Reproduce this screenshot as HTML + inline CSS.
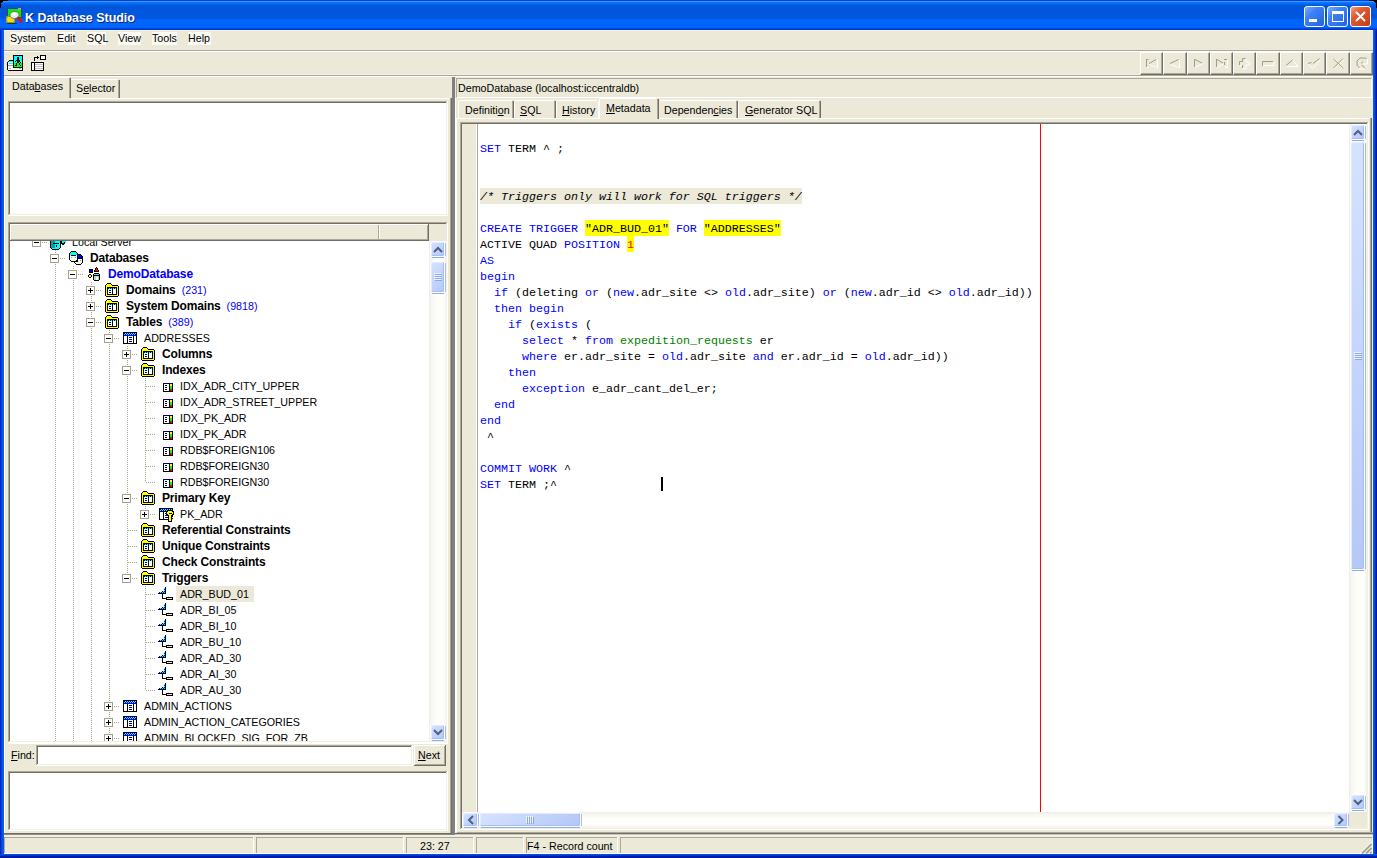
<!DOCTYPE html>
<html><head><meta charset="utf-8">
<style>
*{margin:0;padding:0;box-sizing:border-box}
html,body{width:1377px;height:858px;overflow:hidden;background:#ECE9D8;font-family:"Liberation Sans",sans-serif;font-size:10.7px;color:#000}
.a{position:absolute}
.t{position:absolute;white-space:pre;line-height:13px}
.b{font-weight:bold;font-size:11.8px}
.m{font-family:"Liberation Mono",monospace;font-size:11.67px;line-height:16px}
svg{position:absolute;overflow:visible}
u{text-decoration:underline;text-underline-offset:1px}
</style></head><body>
<div class="a" style="left:0px;top:0px;width:1377px;height:30px;background:linear-gradient(#0042D6 0px,#0042D6 1px,#3D95FF 1px,#3D95FF 2px,#0D7BFF 2px,#0068F0 4px,#0055DA 6px,#0058E0 18px,#0066FF 20px,#0066FF 27px,#005CF0 28px,#0036CF 29px,#0036CF 30px)"></div>
<div class="a" style="left:0px;top:30px;width:4px;height:828px;background:linear-gradient(90deg,#0018A8 0,#0030D0 1px,#0055EA 2px,#0A5FF0 4px)"></div>
<div class="a" style="left:1373px;top:30px;width:4px;height:828px;background:linear-gradient(90deg,#0A5FF0 0,#0045DC 2px,#0020B0 3px,#0010A0 4px)"></div>
<div class="a" style="left:0px;top:854px;width:1377px;height:4px;background:linear-gradient(#0A5FF0 0,#0045DC 1px,#0025B8 2px,#0010A0 4px)"></div>
<svg style="left:0;top:0" width="8" height="8"><path d="M0 0H8V1H3V2H2V3H1V8H0Z" fill="#000"/></svg>
<svg style="left:1369px;top:0" width="8" height="8"><path d="M8 0H0V1H5V2H6V3H7V8H8Z" fill="#000"/></svg>
<svg style="left:4px;top:5px" width="22" height="22">
<rect x="3" y="3" width="15" height="10" fill="#404850"/><rect x="4" y="4" width="13" height="8" fill="#00F000"/><rect x="4" y="3" width="10" height="1" fill="#3838B0"/><rect x="14" y="3" width="3" height="2" fill="#B0A0A0"/>
<rect x="2" y="11" width="9" height="7" rx="2" fill="#E8E020"/><rect x="2.5" y="11.5" width="8" height="6" rx="2" fill="none" stroke="#8A8000" stroke-width="0.8"/><rect x="3" y="18" width="10" height="1" fill="#303020"/>
<ellipse cx="10.5" cy="10" rx="4.6" ry="3.6" fill="#E8E8E8" stroke="#606060" stroke-width="0.8"/><ellipse cx="10" cy="9.5" rx="2" ry="1.2" fill="#fff"/>
<path d="M14 13L17.5 16.5" stroke="#E01000" stroke-width="2.6" stroke-linecap="round"/></svg>
<div class="t" style="left:25px;top:10px;color:#fff;font-weight:bold;font-size:12.45px;line-height:16px;text-shadow:1px 1px 0 #0A246A">K Database Studio</div>
<div class="a" style="left:1304px;top:6px;width:21px;height:21px;background:linear-gradient(135deg,#7CAEFF 0,#3C82F8 35%,#2462E0 100%);border:1px solid #fff;border-radius:3px"></div>
<div class="a" style="left:1327px;top:6px;width:21px;height:21px;background:linear-gradient(135deg,#7CAEFF 0,#3C82F8 35%,#2462E0 100%);border:1px solid #fff;border-radius:3px"></div>
<div class="a" style="left:1350px;top:6px;width:21px;height:21px;background:linear-gradient(135deg,#F0A080 0,#E05A30 35%,#C83C14 100%);border:1px solid #fff;border-radius:3px"></div>
<div class="a" style="left:1309px;top:19px;width:8px;height:3px;background:#fff"></div>
<div class="a" style="left:1332px;top:11px;width:12px;height:11px;border:1px solid #fff;border-top-width:3px"></div>
<svg style="left:1350px;top:6px" width="21" height="21"><path d="M6 6L15 15M15 6L6 15" stroke="#fff" stroke-width="2"/></svg>
<div class="a" style="left:4px;top:30px;width:1369px;height:1px;background:#F8F4E4"></div>
<div class="a" style="left:10px;top:32px;width:35px;height:13px;background:#FBFAF5"></div>
<div class="t" style="left:10px;top:32px;">System</div>
<div class="a" style="left:57px;top:32px;width:18px;height:13px;background:#FBFAF5"></div>
<div class="t" style="left:57px;top:32px;">Edit</div>
<div class="a" style="left:87px;top:32px;width:19px;height:13px;background:#FBFAF5"></div>
<div class="t" style="left:87px;top:32px;">SQL</div>
<div class="a" style="left:118px;top:32px;width:23px;height:13px;background:#FBFAF5"></div>
<div class="t" style="left:118px;top:32px;">View</div>
<div class="a" style="left:152px;top:32px;width:25px;height:13px;background:#FBFAF5"></div>
<div class="t" style="left:152px;top:32px;">Tools</div>
<div class="a" style="left:188px;top:32px;width:23px;height:13px;background:#FBFAF5"></div>
<div class="t" style="left:188px;top:32px;">Help</div>
<div class="a" style="left:4px;top:50px;width:1369px;height:1px;background:#ACA899"></div>
<div class="a" style="left:4px;top:51px;width:1369px;height:1px;background:#FFFFFF"></div>
<svg style="left:7px;top:55px" width="17" height="17" shape-rendering="crispEdges">
<path d="M2 5H6V16H1V15H0V7H1V6H2Z" fill="#000"/>
<rect x="1" y="7" width="5" height="5" fill="#F0F4F4"/><rect x="2" y="6" width="4" height="1" fill="#00FFFF"/><rect x="2" y="8" width="4" height="1" fill="#00FFFF"/><rect x="1" y="10" width="5" height="1" fill="#A0A0A0"/>
<rect x="1" y="11" width="14" height="4" fill="#fff"/><rect x="1" y="15" width="15" height="1" fill="#000"/><rect x="15" y="12" width="1" height="4" fill="#000"/><rect x="2" y="13" width="2" height="1" fill="#B0B0B0"/><rect x="12" y="13" width="2" height="1" fill="#B0B0B0"/>
<rect x="6" y="0" width="10" height="13" fill="#000"/><rect x="7" y="1" width="8" height="7" fill="#00FFFF"/><rect x="7" y="8" width="8" height="4" fill="#00FF00"/>
<rect x="10" y="2" width="2" height="2" fill="#000"/><rect x="10" y="4" width="2" height="4" fill="#000"/><rect x="9" y="5" width="1" height="1" fill="#000"/><rect x="8" y="6" width="1" height="1" fill="#000"/><rect x="12" y="5" width="1" height="2" fill="#000"/><rect x="13" y="7" width="1" height="1" fill="#000"/>
<rect x="9" y="8" width="1" height="3" fill="#000"/><rect x="12" y="8" width="1" height="2" fill="#000"/><rect x="13" y="10" width="1" height="1" fill="#000"/><rect x="8" y="10" width="1" height="1" fill="#000"/>
</svg>
<svg style="left:31px;top:55px" width="16" height="17" shape-rendering="crispEdges">
<rect x="9" y="0" width="6" height="5" fill="#000"/><rect x="10" y="1" width="4" height="3" fill="#fff"/>
<rect x="3" y="2" width="1" height="4" fill="#000"/><rect x="3" y="2" width="4" height="1" fill="#000"/><rect x="6" y="1" width="1" height="3" fill="#000"/><rect x="7" y="2" width="1" height="1" fill="#000"/>
<rect x="0" y="7" width="13" height="9" fill="#000"/><rect x="1" y="8" width="2" height="7" fill="#fff"/><rect x="4" y="8" width="8" height="7" fill="#fff"/>
<rect x="4" y="9" width="8" height="1" fill="#C0C0C0"/><rect x="4" y="11" width="8" height="1" fill="#C0C0C0"/><rect x="4" y="13" width="8" height="1" fill="#C0C0C0"/>
</svg>
<div class="a" style="left:1140px;top:52px;width:233px;height:23px;background:#ECE9D8"></div>
<div class="a" style="left:1140px;top:52px;width:23px;height:23px;border-left:1px solid #FFFFFF;border-top:1px solid #FFFFFF;border-right:1px solid #716F64;border-bottom:1px solid #716F64"></div>
<div class="a" style="left:1161px;top:53px;width:1px;height:21px;background:#ACA899"></div>
<div class="a" style="left:1141px;top:73px;width:21px;height:1px;background:#ACA899"></div>
<div class="a" style="left:1163px;top:52px;width:24px;height:23px;border-left:1px solid #FFFFFF;border-top:1px solid #FFFFFF;border-right:1px solid #716F64;border-bottom:1px solid #716F64"></div>
<div class="a" style="left:1185px;top:53px;width:1px;height:21px;background:#ACA899"></div>
<div class="a" style="left:1164px;top:73px;width:22px;height:1px;background:#ACA899"></div>
<div class="a" style="left:1187px;top:52px;width:23px;height:23px;border-left:1px solid #FFFFFF;border-top:1px solid #FFFFFF;border-right:1px solid #716F64;border-bottom:1px solid #716F64"></div>
<div class="a" style="left:1208px;top:53px;width:1px;height:21px;background:#ACA899"></div>
<div class="a" style="left:1188px;top:73px;width:21px;height:1px;background:#ACA899"></div>
<div class="a" style="left:1210px;top:52px;width:23px;height:23px;border-left:1px solid #FFFFFF;border-top:1px solid #FFFFFF;border-right:1px solid #716F64;border-bottom:1px solid #716F64"></div>
<div class="a" style="left:1231px;top:53px;width:1px;height:21px;background:#ACA899"></div>
<div class="a" style="left:1211px;top:73px;width:21px;height:1px;background:#ACA899"></div>
<div class="a" style="left:1233px;top:52px;width:23px;height:23px;border-left:1px solid #FFFFFF;border-top:1px solid #FFFFFF;border-right:1px solid #716F64;border-bottom:1px solid #716F64"></div>
<div class="a" style="left:1254px;top:53px;width:1px;height:21px;background:#ACA899"></div>
<div class="a" style="left:1234px;top:73px;width:21px;height:1px;background:#ACA899"></div>
<div class="a" style="left:1256px;top:52px;width:24px;height:23px;border-left:1px solid #FFFFFF;border-top:1px solid #FFFFFF;border-right:1px solid #716F64;border-bottom:1px solid #716F64"></div>
<div class="a" style="left:1278px;top:53px;width:1px;height:21px;background:#ACA899"></div>
<div class="a" style="left:1257px;top:73px;width:22px;height:1px;background:#ACA899"></div>
<div class="a" style="left:1280px;top:52px;width:23px;height:23px;border-left:1px solid #FFFFFF;border-top:1px solid #FFFFFF;border-right:1px solid #716F64;border-bottom:1px solid #716F64"></div>
<div class="a" style="left:1301px;top:53px;width:1px;height:21px;background:#ACA899"></div>
<div class="a" style="left:1281px;top:73px;width:21px;height:1px;background:#ACA899"></div>
<div class="a" style="left:1303px;top:52px;width:23px;height:23px;border-left:1px solid #FFFFFF;border-top:1px solid #FFFFFF;border-right:1px solid #716F64;border-bottom:1px solid #716F64"></div>
<div class="a" style="left:1324px;top:53px;width:1px;height:21px;background:#ACA899"></div>
<div class="a" style="left:1304px;top:73px;width:21px;height:1px;background:#ACA899"></div>
<div class="a" style="left:1326px;top:52px;width:24px;height:23px;border-left:1px solid #FFFFFF;border-top:1px solid #FFFFFF;border-right:1px solid #716F64;border-bottom:1px solid #716F64"></div>
<div class="a" style="left:1348px;top:53px;width:1px;height:21px;background:#ACA899"></div>
<div class="a" style="left:1327px;top:73px;width:22px;height:1px;background:#ACA899"></div>
<div class="a" style="left:1350px;top:52px;width:23px;height:23px;border-left:1px solid #FFFFFF;border-top:1px solid #FFFFFF;border-right:1px solid #716F64;border-bottom:1px solid #716F64"></div>
<div class="a" style="left:1371px;top:53px;width:1px;height:21px;background:#ACA899"></div>
<div class="a" style="left:1351px;top:73px;width:21px;height:1px;background:#ACA899"></div>
<div class="a" style="left:4px;top:74px;width:1136px;height:1px;background:#F4F1E4"></div>
<div class="a" style="left:4px;top:75px;width:1369px;height:1px;background:#ACA899"></div>
<div class="a" style="left:4px;top:76px;width:1369px;height:1px;background:#FFFFFF"></div>
<svg style="left:1140px;top:52px" width="24" height="23"><path d="M7 15.5H9M9.5 12.5L16.5 15.5M17.5 8V16" fill="none" stroke="#fff" stroke-width="1"/><path d="M6.5 7V15M6 7.5H8.5M9 11.5L16 7.5" fill="none" stroke="#A09C8C" stroke-width="1"/></svg>
<svg style="left:1163px;top:52px" width="24" height="23"><path d="M8 12.5L16 15.5M16.5 8V16" fill="none" stroke="#fff" stroke-width="1"/><path d="M7 11.5L15.5 7.5" fill="none" stroke="#A09C8C" stroke-width="1"/></svg>
<svg style="left:1187px;top:52px" width="24" height="23"><path d="M8 15.5L16 11.5" fill="none" stroke="#fff" stroke-width="1"/><path d="M7.5 7V15M8 7.5L15 11" fill="none" stroke="#A09C8C" stroke-width="1"/></svg>
<svg style="left:1210px;top:52px" width="24" height="23"><path d="M7 15.5L13.5 12M17.5 8V16M15 15.5H17" fill="none" stroke="#fff" stroke-width="1"/><path d="M6.5 7V15M7 7.5L13 11M14 7.5H17M14.5 10V13" fill="none" stroke="#A09C8C" stroke-width="1"/></svg>
<svg style="left:1233px;top:52px" width="24" height="23"><path d="M13 7V10H16.5V13H13V16.5H10M7 13.5H9" fill="none" stroke="#fff" stroke-width="1"/><path d="M6.5 13V9.5H9.5V6.5H12.5M9.5 13V16" fill="none" stroke="#A09C8C" stroke-width="1"/></svg>
<svg style="left:1256px;top:52px" width="24" height="23"><path d="M7 13.5H18V10" fill="none" stroke="#fff" stroke-width="1"/><path d="M6.5 14V9.5H17" fill="none" stroke="#A09C8C" stroke-width="1"/></svg>
<svg style="left:1280px;top:52px" width="24" height="23"><path d="M13 9L18 14M6.5 14.5H18" fill="none" stroke="#fff" stroke-width="1"/><path d="M6 13.5L12.5 8" fill="none" stroke="#A09C8C" stroke-width="1"/></svg>
<svg style="left:1303px;top:52px" width="24" height="23"><path d="M5.5 12.5L9.5 16.5L17.5 8" fill="none" stroke="#fff" stroke-width="1"/><path d="M5 11.5L8.5 10.5M10 11.5L16.5 6.5" fill="none" stroke="#A09C8C" stroke-width="1"/></svg>
<svg style="left:1326px;top:52px" width="24" height="23"><path d="M8.5 7L18.5 16M18 7.5L8.5 16.5" fill="none" stroke="#fff" stroke-width="1"/><path d="M7.5 7L17.5 16M17 6.5L7.5 16" fill="none" stroke="#A09C8C" stroke-width="1"/></svg>
<svg style="left:1350px;top:52px" width="24" height="23"><path d="M17.5 7V12H13.5M8 14L10 17H14" fill="none" stroke="#fff" stroke-width="1"/><path d="M16.5 6.5L15 6H10L7 9V13L9.5 16M13 9.5L11.5 11.5M12 13L14.5 16" fill="none" stroke="#A09C8C" stroke-width="1"/></svg>
<div class="a" style="left:4px;top:77px;width:1px;height:757px;background:#FFFFFF"></div>
<div class="a" style="left:71px;top:98px;width:378px;height:1px;background:#FFFFFF"></div>
<div class="a" style="left:4px;top:77px;width:67px;height:22px;background:#ECE9D8"></div>
<div class="a" style="left:5px;top:77px;width:64px;height:1px;background:#FFFFFF"></div>
<div class="a" style="left:4px;top:78px;width:1px;height:22px;background:#FFFFFF"></div>
<div class="a" style="left:69px;top:78px;width:1px;height:20px;background:#ACA899"></div>
<div class="a" style="left:70px;top:78px;width:1px;height:20px;background:#716F64"></div>
<div class="t" style="left:12px;top:80px;">Data<u>b</u>ases</div>
<div class="a" style="left:71px;top:79px;width:49px;height:19px;background:#ECE9D8"></div>
<div class="a" style="left:71px;top:79px;width:47px;height:1px;background:#FFFFFF"></div>
<div class="a" style="left:118px;top:80px;width:1px;height:18px;background:#ACA899"></div>
<div class="a" style="left:119px;top:80px;width:1px;height:18px;background:#716F64"></div>
<div class="t" style="left:76px;top:82px;">S<u>e</u>lector</div>
<div class="a" style="left:8px;top:101px;width:440px;height:115px;background:#fff"></div>
<div class="a" style="left:8px;top:101px;width:440px;height:1px;background:#ACA899"></div>
<div class="a" style="left:8px;top:101px;width:1px;height:115px;background:#ACA899"></div>
<div class="a" style="left:8px;top:215px;width:440px;height:1px;background:#FFFFFF"></div>
<div class="a" style="left:447px;top:101px;width:1px;height:115px;background:#FFFFFF"></div>
<div class="a" style="left:9px;top:102px;width:438px;height:1px;background:#716F64"></div>
<div class="a" style="left:9px;top:102px;width:1px;height:113px;background:#716F64"></div>
<div class="a" style="left:9px;top:214px;width:438px;height:1px;background:#F1EFE2"></div>
<div class="a" style="left:446px;top:102px;width:1px;height:113px;background:#F1EFE2"></div>
<div class="a" style="left:8px;top:222px;width:440px;height:521px;background:#fff"></div>
<div class="a" style="left:8px;top:222px;width:440px;height:1px;background:#ACA899"></div>
<div class="a" style="left:8px;top:222px;width:1px;height:521px;background:#ACA899"></div>
<div class="a" style="left:8px;top:742px;width:440px;height:1px;background:#FFFFFF"></div>
<div class="a" style="left:447px;top:222px;width:1px;height:521px;background:#FFFFFF"></div>
<div class="a" style="left:9px;top:223px;width:438px;height:1px;background:#716F64"></div>
<div class="a" style="left:9px;top:223px;width:1px;height:519px;background:#716F64"></div>
<div class="a" style="left:9px;top:741px;width:438px;height:1px;background:#F1EFE2"></div>
<div class="a" style="left:446px;top:223px;width:1px;height:519px;background:#F1EFE2"></div>
<div class="a" style="left:10px;top:224px;width:419px;height:17px;background:#ECE9D8"></div>
<div class="a" style="left:10px;top:240px;width:419px;height:1px;background:#716F64"></div>
<div class="a" style="left:11px;top:239px;width:417px;height:1px;background:#ACA899"></div>
<div class="a" style="left:378px;top:225px;width:1px;height:14px;background:#ACA899"></div>
<div class="a" style="left:379px;top:225px;width:1px;height:14px;background:#FFFFFF"></div>
<div class="a" style="left:428px;top:224px;width:1px;height:17px;background:#716F64"></div>
<div class="a" style="left:427px;top:225px;width:1px;height:14px;background:#ACA899"></div>
<div class="a" style="left:10px;top:224px;width:418px;height:1px;background:#FFFFFF"></div>
<div class="a" style="left:10px;top:224px;width:1px;height:16px;background:#FFFFFF"></div>
<div class="a" style="left:8px;top:743px;width:440px;height:1px;background:#FFFFFF"></div>
<div class="a" style="left:36px;top:745px;width:377px;height:21px;background:#fff"></div>
<div class="a" style="left:36px;top:745px;width:377px;height:1px;background:#ACA899"></div>
<div class="a" style="left:36px;top:745px;width:1px;height:21px;background:#ACA899"></div>
<div class="a" style="left:36px;top:765px;width:377px;height:1px;background:#FFFFFF"></div>
<div class="a" style="left:412px;top:745px;width:1px;height:21px;background:#FFFFFF"></div>
<div class="a" style="left:37px;top:746px;width:375px;height:1px;background:#716F64"></div>
<div class="a" style="left:37px;top:746px;width:1px;height:19px;background:#716F64"></div>
<div class="a" style="left:37px;top:764px;width:375px;height:1px;background:#F1EFE2"></div>
<div class="a" style="left:411px;top:746px;width:1px;height:19px;background:#F1EFE2"></div>
<div class="t" style="left:11px;top:749px;"><u>F</u>ind:</div>
<div class="a" style="left:414px;top:745px;width:32px;height:21px;background:#ECE9D8"></div>
<div class="a" style="left:414px;top:745px;width:32px;height:1px;background:#FFFFFF"></div>
<div class="a" style="left:414px;top:745px;width:1px;height:21px;background:#FFFFFF"></div>
<div class="a" style="left:414px;top:765px;width:32px;height:1px;background:#716F64"></div>
<div class="a" style="left:445px;top:745px;width:1px;height:21px;background:#716F64"></div>
<div class="a" style="left:415px;top:764px;width:30px;height:1px;background:#ACA899"></div>
<div class="a" style="left:444px;top:746px;width:1px;height:19px;background:#ACA899"></div>
<div class="t" style="left:418px;top:749px;"><u>N</u>ext</div>
<div class="a" style="left:8px;top:771px;width:440px;height:60px;background:#fff"></div>
<div class="a" style="left:8px;top:771px;width:440px;height:1px;background:#ACA899"></div>
<div class="a" style="left:8px;top:771px;width:1px;height:60px;background:#ACA899"></div>
<div class="a" style="left:8px;top:830px;width:440px;height:1px;background:#FFFFFF"></div>
<div class="a" style="left:447px;top:771px;width:1px;height:60px;background:#FFFFFF"></div>
<div class="a" style="left:9px;top:772px;width:438px;height:1px;background:#716F64"></div>
<div class="a" style="left:9px;top:772px;width:1px;height:58px;background:#716F64"></div>
<div class="a" style="left:9px;top:829px;width:438px;height:1px;background:#F1EFE2"></div>
<div class="a" style="left:446px;top:772px;width:1px;height:58px;background:#F1EFE2"></div>
<div class="a" style="left:456px;top:78px;width:916px;height:20px;border-top:1px solid #ACA899;border-left:1px solid #ACA899;border-bottom:1px solid #FFFFFF;border-right:1px solid #FFFFFF"></div>
<div class="t" style="left:458px;top:82px;">DemoDatabase (localhost:iccentraldb)</div>
<div class="a" style="left:458px;top:100px;width:56px;height:18px;background:#ECE9D8"></div>
<div class="a" style="left:459px;top:100px;width:53px;height:1px;background:#FFFFFF"></div>
<div class="a" style="left:458px;top:101px;width:1px;height:17px;background:#FFFFFF"></div>
<div class="a" style="left:512px;top:101px;width:1px;height:17px;background:#ACA899"></div>
<div class="a" style="left:513px;top:101px;width:1px;height:17px;background:#716F64"></div>
<div class="t" style="left:465px;top:104px;">Definiti<u>o</u>n</div>
<div class="a" style="left:514px;top:100px;width:42px;height:18px;background:#ECE9D8"></div>
<div class="a" style="left:515px;top:100px;width:39px;height:1px;background:#FFFFFF"></div>
<div class="a" style="left:514px;top:101px;width:1px;height:17px;background:#FFFFFF"></div>
<div class="a" style="left:554px;top:101px;width:1px;height:17px;background:#ACA899"></div>
<div class="a" style="left:555px;top:101px;width:1px;height:17px;background:#716F64"></div>
<div class="t" style="left:520px;top:104px;"><u>S</u>QL</div>
<div class="a" style="left:556px;top:100px;width:43px;height:18px;background:#ECE9D8"></div>
<div class="a" style="left:557px;top:100px;width:40px;height:1px;background:#FFFFFF"></div>
<div class="a" style="left:556px;top:101px;width:1px;height:17px;background:#FFFFFF"></div>
<div class="a" style="left:598px;top:101px;width:1px;height:17px;background:#FFFFFF"></div>
<div class="t" style="left:562px;top:104px;"><u>H</u>istory</div>
<div class="a" style="left:659px;top:100px;width:79px;height:18px;background:#ECE9D8"></div>
<div class="a" style="left:660px;top:100px;width:76px;height:1px;background:#FFFFFF"></div>
<div class="a" style="left:736px;top:101px;width:1px;height:17px;background:#ACA899"></div>
<div class="a" style="left:737px;top:101px;width:1px;height:17px;background:#716F64"></div>
<div class="t" style="left:664px;top:104px;">Dependen<u>c</u>ies</div>
<div class="a" style="left:738px;top:100px;width:83px;height:18px;background:#ECE9D8"></div>
<div class="a" style="left:739px;top:100px;width:80px;height:1px;background:#FFFFFF"></div>
<div class="a" style="left:738px;top:101px;width:1px;height:17px;background:#FFFFFF"></div>
<div class="a" style="left:819px;top:101px;width:1px;height:17px;background:#ACA899"></div>
<div class="a" style="left:820px;top:101px;width:1px;height:17px;background:#716F64"></div>
<div class="t" style="left:745px;top:104px;"><u>G</u>enerator SQL</div>
<div class="a" style="left:456px;top:118px;width:916px;height:1px;background:#FFFFFF"></div>
<div class="a" style="left:599px;top:98px;width:60px;height:21px;background:#ECE9D8"></div>
<div class="a" style="left:600px;top:98px;width:56px;height:1px;background:#FFFFFF"></div>
<div class="a" style="left:599px;top:99px;width:1px;height:20px;background:#FFFFFF"></div>
<div class="a" style="left:657px;top:99px;width:1px;height:20px;background:#ACA899"></div>
<div class="a" style="left:658px;top:99px;width:1px;height:20px;background:#716F64"></div>
<div class="t" style="left:606px;top:102px;"><u>M</u>etadata</div>
<div class="a" style="left:1371px;top:118px;width:1px;height:716px;background:#716F64"></div>
<div class="a" style="left:1370px;top:118px;width:1px;height:716px;background:#ACA899"></div>
<div class="a" style="left:460px;top:122px;width:909px;height:708px;background:#fff"></div>
<div class="a" style="left:460px;top:122px;width:909px;height:1px;background:#ACA899"></div>
<div class="a" style="left:460px;top:122px;width:1px;height:708px;background:#ACA899"></div>
<div class="a" style="left:460px;top:829px;width:909px;height:1px;background:#FFFFFF"></div>
<div class="a" style="left:1368px;top:122px;width:1px;height:708px;background:#FFFFFF"></div>
<div class="a" style="left:461px;top:123px;width:907px;height:1px;background:#716F64"></div>
<div class="a" style="left:461px;top:123px;width:1px;height:706px;background:#716F64"></div>
<div class="a" style="left:461px;top:828px;width:907px;height:1px;background:#F1EFE2"></div>
<div class="a" style="left:1367px;top:123px;width:1px;height:706px;background:#F1EFE2"></div>
<div class="a" style="left:462px;top:124px;width:14px;height:688px;background:#ECE9D8"></div>
<div class="a" style="left:476px;top:124px;width:1px;height:688px;background:#FFFFFF"></div>
<div class="a" style="left:477px;top:124px;width:1px;height:688px;background:#ACA899"></div>
<div class="a" style="left:1040px;top:124px;width:1px;height:688px;background:#FF0000"></div>
<div class="a" style="left:429px;top:241px;width:18px;height:500px;background:linear-gradient(90deg,#EEEDE5 0,#F6F5F0 2px,#FDFDFA 40%,#FEFEFB 80%,#F3F1EC 100%)"></div>
<div class="a" style="left:430px;top:241px;width:15px;height:16px;background:#FCFCFE;border-radius:3px"></div>
<div class="a" style="left:431px;top:242px;width:13px;height:14px;background:linear-gradient(135deg,#D6E3FE 0,#C6D6FC 45%,#B4C8F7 100%);border-radius:2px;box-shadow:inset -1px -1px 0 #A8BEF2, inset 1px 1px 0 #E4ECFF"></div>
<div class="a" style="left:432px;top:257px;width:12px;height:1px;background:#8FAEE6"></div>
<div class="a" style="left:445px;top:243px;width:1px;height:13px;background:#A8BEE6"></div>
<svg style="left:0;top:0" width="1377" height="858"><path d="M434.0 252.0L438.0 248.0L442.0 252.0" stroke="#4D6185" stroke-width="2" fill="none"/></svg>
<div class="a" style="left:430px;top:261px;width:15px;height:32px;background:#FCFCFE;border-radius:3px"></div>
<div class="a" style="left:431px;top:262px;width:13px;height:30px;background:linear-gradient(135deg,#D6E3FE 0,#C6D6FC 45%,#B4C8F7 100%);border-radius:2px;box-shadow:inset -1px -1px 0 #A8BEF2, inset 1px 1px 0 #E4ECFF"></div>
<div class="a" style="left:432px;top:293px;width:12px;height:1px;background:#8FAEE6"></div>
<div class="a" style="left:445px;top:263px;width:1px;height:29px;background:#A8BEE6"></div>
<div class="a" style="left:434px;top:273px;width:7px;height:1px;background:#EEF4FE"></div>
<div class="a" style="left:435px;top:274px;width:7px;height:1px;background:#8CA8E8"></div>
<div class="a" style="left:434px;top:275px;width:7px;height:1px;background:#EEF4FE"></div>
<div class="a" style="left:435px;top:276px;width:7px;height:1px;background:#8CA8E8"></div>
<div class="a" style="left:434px;top:277px;width:7px;height:1px;background:#EEF4FE"></div>
<div class="a" style="left:435px;top:278px;width:7px;height:1px;background:#8CA8E8"></div>
<div class="a" style="left:434px;top:279px;width:7px;height:1px;background:#EEF4FE"></div>
<div class="a" style="left:435px;top:280px;width:7px;height:1px;background:#8CA8E8"></div>
<div class="a" style="left:430px;top:724px;width:15px;height:16px;background:#FCFCFE;border-radius:3px"></div>
<div class="a" style="left:431px;top:725px;width:13px;height:14px;background:linear-gradient(135deg,#D6E3FE 0,#C6D6FC 45%,#B4C8F7 100%);border-radius:2px;box-shadow:inset -1px -1px 0 #A8BEF2, inset 1px 1px 0 #E4ECFF"></div>
<div class="a" style="left:432px;top:740px;width:12px;height:1px;background:#8FAEE6"></div>
<div class="a" style="left:445px;top:726px;width:1px;height:13px;background:#A8BEE6"></div>
<svg style="left:0;top:0" width="1377" height="858"><path d="M434.0 730.0L438.0 734.0L442.0 730.0" stroke="#4D6185" stroke-width="2" fill="none"/></svg>
<div class="a" style="left:429px;top:224px;width:18px;height:17px;background:#ECE9D8"></div>
<div class="a" style="left:1349px;top:124px;width:18px;height:688px;background:linear-gradient(90deg,#EEEDE5 0,#F6F5F0 2px,#FDFDFA 40%,#FEFEFB 80%,#F3F1EC 100%)"></div>
<div class="a" style="left:1350px;top:124px;width:15px;height:16px;background:#FCFCFE;border-radius:3px"></div>
<div class="a" style="left:1351px;top:125px;width:13px;height:14px;background:linear-gradient(135deg,#D6E3FE 0,#C6D6FC 45%,#B4C8F7 100%);border-radius:2px;box-shadow:inset -1px -1px 0 #A8BEF2, inset 1px 1px 0 #E4ECFF"></div>
<div class="a" style="left:1352px;top:140px;width:12px;height:1px;background:#8FAEE6"></div>
<div class="a" style="left:1365px;top:126px;width:1px;height:13px;background:#A8BEE6"></div>
<svg style="left:0;top:0" width="1377" height="858"><path d="M1354.0 135.0L1358.0 131.0L1362.0 135.0" stroke="#4D6185" stroke-width="2" fill="none"/></svg>
<div class="a" style="left:1350px;top:141px;width:15px;height:429px;background:#FCFCFE;border-radius:3px"></div>
<div class="a" style="left:1351px;top:142px;width:13px;height:427px;background:linear-gradient(135deg,#D6E3FE 0,#C6D6FC 45%,#B4C8F7 100%);border-radius:2px;box-shadow:inset -1px -1px 0 #A8BEF2, inset 1px 1px 0 #E4ECFF"></div>
<div class="a" style="left:1352px;top:570px;width:12px;height:1px;background:#8FAEE6"></div>
<div class="a" style="left:1365px;top:143px;width:1px;height:426px;background:#A8BEE6"></div>
<div class="a" style="left:1354px;top:352px;width:7px;height:1px;background:#EEF4FE"></div>
<div class="a" style="left:1355px;top:353px;width:7px;height:1px;background:#8CA8E8"></div>
<div class="a" style="left:1354px;top:354px;width:7px;height:1px;background:#EEF4FE"></div>
<div class="a" style="left:1355px;top:355px;width:7px;height:1px;background:#8CA8E8"></div>
<div class="a" style="left:1354px;top:356px;width:7px;height:1px;background:#EEF4FE"></div>
<div class="a" style="left:1355px;top:357px;width:7px;height:1px;background:#8CA8E8"></div>
<div class="a" style="left:1354px;top:358px;width:7px;height:1px;background:#EEF4FE"></div>
<div class="a" style="left:1355px;top:359px;width:7px;height:1px;background:#8CA8E8"></div>
<div class="a" style="left:1350px;top:794px;width:15px;height:16px;background:#FCFCFE;border-radius:3px"></div>
<div class="a" style="left:1351px;top:795px;width:13px;height:14px;background:linear-gradient(135deg,#D6E3FE 0,#C6D6FC 45%,#B4C8F7 100%);border-radius:2px;box-shadow:inset -1px -1px 0 #A8BEF2, inset 1px 1px 0 #E4ECFF"></div>
<div class="a" style="left:1352px;top:810px;width:12px;height:1px;background:#8FAEE6"></div>
<div class="a" style="left:1365px;top:796px;width:1px;height:13px;background:#A8BEE6"></div>
<svg style="left:0;top:0" width="1377" height="858"><path d="M1354.0 800.0L1358.0 804.0L1362.0 800.0" stroke="#4D6185" stroke-width="2" fill="none"/></svg>
<div class="a" style="left:462px;top:812px;width:887px;height:16px;background:linear-gradient(180deg,#EEEDE5 0,#F6F5F0 2px,#FDFDFA 40%,#FEFEFB 80%,#F3F1EC 100%)"></div>
<div class="a" style="left:462px;top:812px;width:16px;height:15px;background:#FCFCFE;border-radius:3px"></div>
<div class="a" style="left:463px;top:813px;width:14px;height:13px;background:linear-gradient(135deg,#D6E3FE 0,#C6D6FC 45%,#B4C8F7 100%);border-radius:2px;box-shadow:inset -1px -1px 0 #A8BEF2, inset 1px 1px 0 #E4ECFF"></div>
<div class="a" style="left:464px;top:827px;width:13px;height:1px;background:#8FAEE6"></div>
<div class="a" style="left:478px;top:814px;width:1px;height:12px;background:#A8BEE6"></div>
<svg style="left:0;top:0" width="1377" height="858"><path d="M473.0 816.0L469.0 820.0L473.0 824.0" stroke="#4D6185" stroke-width="2" fill="none"/></svg>
<div class="a" style="left:479px;top:812px;width:102px;height:15px;background:#FCFCFE;border-radius:3px"></div>
<div class="a" style="left:480px;top:813px;width:100px;height:13px;background:linear-gradient(135deg,#D6E3FE 0,#C6D6FC 45%,#B4C8F7 100%);border-radius:2px;box-shadow:inset -1px -1px 0 #A8BEF2, inset 1px 1px 0 #E4ECFF"></div>
<div class="a" style="left:481px;top:827px;width:99px;height:1px;background:#8FAEE6"></div>
<div class="a" style="left:581px;top:814px;width:1px;height:12px;background:#A8BEE6"></div>
<div class="a" style="left:526px;top:816px;width:1px;height:7px;background:#EEF4FE"></div>
<div class="a" style="left:527px;top:817px;width:1px;height:7px;background:#8CA8E8"></div>
<div class="a" style="left:528px;top:816px;width:1px;height:7px;background:#EEF4FE"></div>
<div class="a" style="left:529px;top:817px;width:1px;height:7px;background:#8CA8E8"></div>
<div class="a" style="left:530px;top:816px;width:1px;height:7px;background:#EEF4FE"></div>
<div class="a" style="left:531px;top:817px;width:1px;height:7px;background:#8CA8E8"></div>
<div class="a" style="left:532px;top:816px;width:1px;height:7px;background:#EEF4FE"></div>
<div class="a" style="left:533px;top:817px;width:1px;height:7px;background:#8CA8E8"></div>
<div class="a" style="left:1333px;top:812px;width:15px;height:15px;background:#FCFCFE;border-radius:3px"></div>
<div class="a" style="left:1334px;top:813px;width:13px;height:13px;background:linear-gradient(135deg,#D6E3FE 0,#C6D6FC 45%,#B4C8F7 100%);border-radius:2px;box-shadow:inset -1px -1px 0 #A8BEF2, inset 1px 1px 0 #E4ECFF"></div>
<div class="a" style="left:1335px;top:827px;width:12px;height:1px;background:#8FAEE6"></div>
<div class="a" style="left:1348px;top:814px;width:1px;height:12px;background:#A8BEE6"></div>
<svg style="left:0;top:0" width="1377" height="858"><path d="M1338.5 816.0L1342.5 820.0L1338.5 824.0" stroke="#4D6185" stroke-width="2" fill="none"/></svg>
<div class="a" style="left:1349px;top:812px;width:18px;height:16px;background:#ECE9D8"></div>
<div class="a" style="left:452px;top:77px;width:3px;height:758px;background:#808080"></div>
<div class="a" style="left:450px;top:98px;width:1px;height:735px;background:#ACA899"></div>
<div class="a" style="left:451px;top:98px;width:1px;height:736px;background:#716F64"></div>
<div class="a" style="left:455px;top:98px;width:1px;height:735px;background:#FFFFFF"></div>
<div class="a" style="left:456px;top:119px;width:1px;height:713px;background:#FFFFFF"></div>
<div class="a" style="left:457px;top:832px;width:916px;height:1px;background:#ACA899"></div>
<div class="a" style="left:4px;top:833px;width:448px;height:1px;background:#716F64"></div>
<div class="a" style="left:455px;top:833px;width:918px;height:1px;background:#716F64"></div>
<div class="a" style="left:4px;top:834px;width:448px;height:1px;background:#8C897C"></div>
<div class="a" style="left:455px;top:834px;width:918px;height:1px;background:#C8C5B8"></div>
<div class="a" style="left:4px;top:835px;width:1369px;height:1px;background:#F5F3E6"></div>
<div class="a" style="left:4px;top:836px;width:1369px;height:1px;background:#F0EEE2"></div>
<div class="a" style="left:4px;top:837px;width:250px;height:1px;background:#ACA899"></div>
<div class="a" style="left:4px;top:837px;width:1px;height:16px;background:#ACA899"></div>
<div class="a" style="left:253px;top:837px;width:1px;height:16px;background:#FFFFFF"></div>
<div class="a" style="left:256px;top:837px;width:148px;height:1px;background:#ACA899"></div>
<div class="a" style="left:256px;top:837px;width:1px;height:16px;background:#ACA899"></div>
<div class="a" style="left:403px;top:837px;width:1px;height:16px;background:#FFFFFF"></div>
<div class="a" style="left:406px;top:837px;width:68px;height:1px;background:#ACA899"></div>
<div class="a" style="left:406px;top:837px;width:1px;height:16px;background:#ACA899"></div>
<div class="a" style="left:473px;top:837px;width:1px;height:16px;background:#FFFFFF"></div>
<div class="a" style="left:476px;top:837px;width:48px;height:1px;background:#ACA899"></div>
<div class="a" style="left:476px;top:837px;width:1px;height:16px;background:#ACA899"></div>
<div class="a" style="left:523px;top:837px;width:1px;height:16px;background:#FFFFFF"></div>
<div class="a" style="left:526px;top:837px;width:92px;height:1px;background:#ACA899"></div>
<div class="a" style="left:526px;top:837px;width:1px;height:16px;background:#ACA899"></div>
<div class="a" style="left:617px;top:837px;width:1px;height:16px;background:#FFFFFF"></div>
<div class="a" style="left:620px;top:837px;width:753px;height:1px;background:#ACA899"></div>
<div class="a" style="left:620px;top:837px;width:1px;height:16px;background:#ACA899"></div>
<div class="a" style="left:1372px;top:837px;width:1px;height:16px;background:#FFFFFF"></div>
<div class="a" style="left:4px;top:853px;width:1369px;height:1px;background:#FFFFFF"></div>
<div class="t" style="left:420px;top:840px;">23: 27</div>
<div class="t" style="left:527px;top:840px;">F4 - Record count</div>
<svg style="left:1356px;top:838px" width="16" height="16"><path d="M4.5 15.5L15.5 4.5M8.5 15.5L15.5 8.5M12.5 15.5L15.5 12.5" stroke="#fff" stroke-width="1.2"/><path d="M6 15.5L15.5 6M10 15.5L15.5 10M14 15.5L15.5 14" stroke="#A8A492" stroke-width="1.8"/></svg>
<div class="t m" style="left:480px;top:141px"><span style="color:#0000FF">SET</span> TERM ^ ;</div>
<div class="a" style="left:480px;top:188px;width:322px;height:16px;background:#ECE9D8"></div>
<div class="t m" style="left:480px;top:189px"><span style="font-style:italic">/* Triggers only will work for SQL triggers */</span></div>
<div class="a" style="left:585px;top:220px;width:84px;height:16px;background:#FFFF00"></div>
<div class="a" style="left:704px;top:220px;width:77px;height:16px;background:#FFFF00"></div>
<div class="t m" style="left:480px;top:221px"><span style="color:#0000FF">CREATE TRIGGER</span> &quot;ADR_BUD_01&quot; <span style="color:#0000FF">FOR</span> &quot;ADDRESSES&quot;</div>
<div class="a" style="left:627px;top:236px;width:7px;height:16px;background:#FFFF00"></div>
<div class="t m" style="left:480px;top:237px">ACTIVE QUAD <span style="color:#0000FF">POSITION</span> <span style="color:#FF0000">1</span></div>
<div class="t m" style="left:480px;top:253px"><span style="color:#0000FF">AS</span></div>
<div class="t m" style="left:480px;top:269px"><span style="color:#0000FF">begin</span></div>
<div class="t m" style="left:480px;top:285px">  <span style="color:#0000FF">if</span> (deleting <span style="color:#0000FF">or</span> (<span style="color:#0000FF">new</span>.adr_site &lt;&gt; <span style="color:#0000FF">old</span>.adr_site) <span style="color:#0000FF">or</span> (<span style="color:#0000FF">new</span>.adr_id &lt;&gt; <span style="color:#0000FF">old</span>.adr_id))</div>
<div class="t m" style="left:480px;top:301px">  <span style="color:#0000FF">then begin</span></div>
<div class="t m" style="left:480px;top:317px">    <span style="color:#0000FF">if</span> (<span style="color:#0000FF">exists</span> (</div>
<div class="t m" style="left:480px;top:333px">      <span style="color:#0000FF">select</span> * <span style="color:#0000FF">from</span> <span style="color:#008000">expedition_requests</span> er</div>
<div class="t m" style="left:480px;top:349px">      <span style="color:#0000FF">where</span> er.adr_site = <span style="color:#0000FF">old</span>.adr_site <span style="color:#0000FF">and</span> er.adr_id = <span style="color:#0000FF">old</span>.adr_id))</div>
<div class="t m" style="left:480px;top:365px">    <span style="color:#0000FF">then</span></div>
<div class="t m" style="left:480px;top:381px">      <span style="color:#0000FF">exception</span> e_adr_cant_del_er;</div>
<div class="t m" style="left:480px;top:397px">  <span style="color:#0000FF">end</span></div>
<div class="t m" style="left:480px;top:413px"><span style="color:#0000FF">end</span></div>
<div class="t m" style="left:480px;top:429px"> ^</div>
<div class="t m" style="left:480px;top:461px"><span style="color:#0000FF">COMMIT WORK</span> ^</div>
<div class="t m" style="left:480px;top:477px"><span style="color:#0000FF">SET</span> TERM ;^</div>
<div class="a" style="left:661px;top:477px;width:2px;height:14px;background:#000"></div>
<div class="a" style="left:10px;top:241px;width:419px;height:500px;overflow:hidden">
<div class="a" style="left:45px;top:5px;width:1px;height:495px;background:repeating-linear-gradient(to bottom,#A8A290 0,#A8A290 1px,transparent 1px,transparent 2px)"></div>
<div class="a" style="left:63px;top:25px;width:1px;height:475px;background:repeating-linear-gradient(to bottom,#A8A290 0,#A8A290 1px,transparent 1px,transparent 2px)"></div>
<div class="a" style="left:81px;top:41px;width:1px;height:459px;background:repeating-linear-gradient(to bottom,#A8A290 0,#A8A290 1px,transparent 1px,transparent 2px)"></div>
<div class="a" style="left:99px;top:89px;width:1px;height:411px;background:repeating-linear-gradient(to bottom,#A8A290 0,#A8A290 1px,transparent 1px,transparent 2px)"></div>
<div class="a" style="left:117px;top:105px;width:1px;height:232px;background:repeating-linear-gradient(to bottom,#A8A290 0,#A8A290 1px,transparent 1px,transparent 2px)"></div>
<div class="a" style="left:135px;top:137px;width:1px;height:104px;background:repeating-linear-gradient(to bottom,#A8A290 0,#A8A290 1px,transparent 1px,transparent 2px)"></div>
<div class="a" style="left:135px;top:265px;width:1px;height:8px;background:repeating-linear-gradient(to bottom,#A8A290 0,#A8A290 1px,transparent 1px,transparent 2px)"></div>
<div class="a" style="left:135px;top:345px;width:1px;height:104px;background:repeating-linear-gradient(to bottom,#A8A290 0,#A8A290 1px,transparent 1px,transparent 2px)"></div>
<div class="a" style="left:22px;top:-3px;width:9px;height:9px;background:#fff;border:1px solid #A8A08C"></div>
<div class="a" style="left:24px;top:1px;width:5px;height:1px;background:#000"></div>
<div class="a" style="left:32px;top:1px;width:5px;height:1px;background:repeating-linear-gradient(to right,#A8A290 0,#A8A290 1px,transparent 1px,transparent 2px)"></div>
<svg style="left:40px;top:-7px" width="16" height="16" shape-rendering="crispEdges"><path d="M0 5H11V14H10V15H9V16H2V15H1V14H0Z" fill="#000"/><rect x="1" y="6" width="9" height="8" fill="#00FFFF"/><rect x="1" y="6" width="4" height="8" fill="#00A0A8"/><rect x="2" y="14" width="7" height="1" fill="#00FFFF"/><rect x="3" y="9" width="6" height="1" fill="#000"/><rect x="6" y="11" width="1" height="2" fill="#000"/><path d="M11 6H16V9H15V10H14V11H12V10H11Z" fill="#000"/><path d="M12 6H16V9H15V8H14V9H12Z" fill="#00FFFF"/></svg>
<div class="t" style="left:62px;top:-7px;line-height:16px">Local Server</div>
<div class="a" style="left:40px;top:13px;width:9px;height:9px;background:#fff;border:1px solid #A8A08C"></div>
<div class="a" style="left:42px;top:17px;width:5px;height:1px;background:#000"></div>
<div class="a" style="left:50px;top:17px;width:5px;height:1px;background:repeating-linear-gradient(to right,#A8A290 0,#A8A290 1px,transparent 1px,transparent 2px)"></div>
<svg style="left:58px;top:9px" width="16" height="16" shape-rendering="crispEdges"><path d="M9 4H13V5H14V6H15V13H14V14H13V15H8V14H7V13H6V11H9Z" fill="#000"/><rect x="10" y="5" width="3" height="3" fill="#0000FF"/><rect x="13" y="6" width="1" height="1" fill="#0000FF"/><rect x="7" y="12" width="7" height="1" fill="#F4F4F4"/><rect x="10" y="9" width="4" height="4" fill="#F4F4F4"/><rect x="8" y="13" width="5" height="1" fill="#F4F4F4"/><rect x="12" y="10" width="1" height="1" fill="#A0A0A0"/><path d="M3 1H8V2H9V3H10V10H9V11H8V12H3V11H2V10H1V3H2V2H3Z" fill="#000"/><rect x="3" y="2" width="5" height="1" fill="#00FFFF"/><rect x="2" y="3" width="7" height="2" fill="#00FFFF"/><rect x="2" y="5" width="7" height="5" fill="#F4F4F4"/><rect x="3" y="10" width="5" height="1" fill="#F4F4F4"/><rect x="3" y="5" width="5" height="1" fill="#000"/><rect x="3" y="7" width="1" height="1" fill="#A0A0A0"/><rect x="7" y="7" width="1" height="1" fill="#A0A0A0"/></svg>
<div class="t" style="left:80px;top:9px;line-height:16px;font-weight:bold;font-size:12px;letter-spacing:-0.15px">Databases</div>
<div class="a" style="left:58px;top:29px;width:9px;height:9px;background:#fff;border:1px solid #A8A08C"></div>
<div class="a" style="left:60px;top:33px;width:5px;height:1px;background:#000"></div>
<div class="a" style="left:68px;top:33px;width:5px;height:1px;background:repeating-linear-gradient(to right,#A8A290 0,#A8A290 1px,transparent 1px,transparent 2px)"></div>
<svg style="left:76px;top:25px" width="16" height="16" shape-rendering="crispEdges"><rect x="3" y="3" width="4" height="4" fill="#000"/><rect x="4" y="4" width="2" height="2" fill="#0000FF"/><path d="M10 1H11V2H12V4H13V6H8V4H9V2H10Z" fill="#000"/><rect x="10" y="2" width="1" height="3" fill="#FF0000"/><rect x="9" y="4" width="3" height="1" fill="#FF0000"/><path d="M3 8H5V9H6V11H5V12H3V11H2V9H3Z" fill="#000"/><rect x="3" y="9" width="2" height="2" fill="#FFFF00"/><path d="M8 7H13V8H14V14H13V15H8V14H7V8H8Z" fill="#000"/><rect x="8" y="8" width="5" height="1" fill="#00FFFF"/><rect x="8" y="10" width="5" height="4" fill="#C8C8C8"/><rect x="10" y="11" width="2" height="3" fill="#fff"/></svg>
<div class="t" style="left:98px;top:25px;color:#0000FF;line-height:16px;font-weight:bold;font-size:12px;letter-spacing:-0.15px">DemoDatabase</div>
<div class="a" style="left:76px;top:45px;width:9px;height:9px;background:#fff;border:1px solid #A8A08C"></div>
<div class="a" style="left:78px;top:49px;width:5px;height:1px;background:#000"></div>
<div class="a" style="left:80px;top:47px;width:1px;height:5px;background:#000"></div>
<div class="a" style="left:86px;top:49px;width:5px;height:1px;background:repeating-linear-gradient(to right,#A8A290 0,#A8A290 1px,transparent 1px,transparent 2px)"></div>
<svg style="left:94px;top:41px" width="16" height="16" shape-rendering="crispEdges"><path d="M3 1H7V2H8V3H14V4H15V14H14V15H2V14H1V3H2V2H3Z" fill="#000"/><path d="M3 2H7V3H8V4H14V14H2V3H3Z" fill="#FFFF00"/><rect x="3" y="5" width="10" height="8" fill="#000"/><rect x="4" y="6" width="4" height="6" fill="#fff"/><rect x="9" y="6" width="3" height="6" fill="#fff"/><rect x="4" y="6" width="1" height="1" fill="#0000FF"/><rect x="5" y="6" width="1" height="1" fill="#00FFFF"/><rect x="6" y="6" width="1" height="1" fill="#0000FF"/><rect x="7" y="6" width="1" height="1" fill="#00FFFF"/><rect x="9" y="6" width="1" height="1" fill="#00FFFF"/><rect x="10" y="6" width="1" height="1" fill="#0000FF"/><rect x="11" y="6" width="1" height="1" fill="#00FFFF"/><rect x="5" y="8" width="2" height="1" fill="#000080"/><rect x="5" y="10" width="2" height="1" fill="#000080"/></svg>
<div class="t" style="left:116px;top:41px;line-height:16px;font-weight:bold;font-size:12px;letter-spacing:-0.15px">Domains<span style="font-weight:normal;font-size:10.7px;color:#0000FF;letter-spacing:0;margin-left:6px;position:relative;top:0px">(231)</span></div>
<div class="a" style="left:76px;top:61px;width:9px;height:9px;background:#fff;border:1px solid #A8A08C"></div>
<div class="a" style="left:78px;top:65px;width:5px;height:1px;background:#000"></div>
<div class="a" style="left:80px;top:63px;width:1px;height:5px;background:#000"></div>
<div class="a" style="left:86px;top:65px;width:5px;height:1px;background:repeating-linear-gradient(to right,#A8A290 0,#A8A290 1px,transparent 1px,transparent 2px)"></div>
<svg style="left:94px;top:57px" width="16" height="16" shape-rendering="crispEdges"><path d="M3 1H7V2H8V3H14V4H15V14H14V15H2V14H1V3H2V2H3Z" fill="#000"/><path d="M3 2H7V3H8V4H14V14H2V3H3Z" fill="#FFFF00"/><rect x="3" y="5" width="10" height="8" fill="#000"/><rect x="4" y="6" width="4" height="6" fill="#fff"/><rect x="9" y="6" width="3" height="6" fill="#fff"/><rect x="4" y="6" width="1" height="1" fill="#0000FF"/><rect x="5" y="6" width="1" height="1" fill="#00FFFF"/><rect x="6" y="6" width="1" height="1" fill="#0000FF"/><rect x="7" y="6" width="1" height="1" fill="#00FFFF"/><rect x="9" y="6" width="1" height="1" fill="#00FFFF"/><rect x="10" y="6" width="1" height="1" fill="#0000FF"/><rect x="11" y="6" width="1" height="1" fill="#00FFFF"/><rect x="5" y="8" width="2" height="1" fill="#000080"/><rect x="5" y="10" width="2" height="1" fill="#000080"/></svg>
<div class="t" style="left:116px;top:57px;line-height:16px;font-weight:bold;font-size:12px;letter-spacing:-0.15px">System Domains<span style="font-weight:normal;font-size:10.7px;color:#0000FF;letter-spacing:0;margin-left:6px;position:relative;top:0px">(9818)</span></div>
<div class="a" style="left:76px;top:77px;width:9px;height:9px;background:#fff;border:1px solid #A8A08C"></div>
<div class="a" style="left:78px;top:81px;width:5px;height:1px;background:#000"></div>
<div class="a" style="left:86px;top:81px;width:5px;height:1px;background:repeating-linear-gradient(to right,#A8A290 0,#A8A290 1px,transparent 1px,transparent 2px)"></div>
<svg style="left:94px;top:73px" width="16" height="16" shape-rendering="crispEdges"><path d="M3 1H7V2H8V3H14V4H15V14H14V15H2V14H1V3H2V2H3Z" fill="#000"/><path d="M3 2H7V3H8V4H14V14H2V3H3Z" fill="#FFFF00"/><rect x="3" y="5" width="10" height="8" fill="#000"/><rect x="4" y="6" width="4" height="6" fill="#fff"/><rect x="9" y="6" width="3" height="6" fill="#fff"/><rect x="4" y="6" width="1" height="1" fill="#0000FF"/><rect x="5" y="6" width="1" height="1" fill="#00FFFF"/><rect x="6" y="6" width="1" height="1" fill="#0000FF"/><rect x="7" y="6" width="1" height="1" fill="#00FFFF"/><rect x="9" y="6" width="1" height="1" fill="#00FFFF"/><rect x="10" y="6" width="1" height="1" fill="#0000FF"/><rect x="11" y="6" width="1" height="1" fill="#00FFFF"/><rect x="5" y="8" width="2" height="1" fill="#000080"/><rect x="5" y="10" width="2" height="1" fill="#000080"/></svg>
<div class="t" style="left:116px;top:73px;line-height:16px;font-weight:bold;font-size:12px;letter-spacing:-0.15px">Tables<span style="font-weight:normal;font-size:10.7px;color:#0000FF;letter-spacing:0;margin-left:6px;position:relative;top:0px">(389)</span></div>
<div class="a" style="left:94px;top:93px;width:9px;height:9px;background:#fff;border:1px solid #A8A08C"></div>
<div class="a" style="left:96px;top:97px;width:5px;height:1px;background:#000"></div>
<div class="a" style="left:104px;top:97px;width:5px;height:1px;background:repeating-linear-gradient(to right,#A8A290 0,#A8A290 1px,transparent 1px,transparent 2px)"></div>
<svg style="left:112px;top:89px" width="16" height="16" shape-rendering="crispEdges"><rect x="1" y="2" width="14" height="12" fill="#000"/><rect x="2" y="3" width="12" height="3" fill="#0000F0"/><rect x="3" y="3" width="1" height="1" fill="#00FFFF"/><rect x="5" y="3" width="1" height="1" fill="#00FFFF"/><rect x="7" y="3" width="1" height="1" fill="#00FFFF"/><rect x="9" y="3" width="1" height="1" fill="#00FFFF"/><rect x="11" y="3" width="1" height="1" fill="#00FFFF"/><rect x="13" y="3" width="1" height="1" fill="#00FFFF"/><rect x="2" y="4" width="1" height="1" fill="#00FFFF"/><rect x="4" y="4" width="1" height="1" fill="#00FFFF"/><rect x="6" y="4" width="1" height="1" fill="#00FFFF"/><rect x="8" y="4" width="1" height="1" fill="#00FFFF"/><rect x="10" y="4" width="1" height="1" fill="#00FFFF"/><rect x="12" y="4" width="1" height="1" fill="#00FFFF"/><rect x="2" y="6" width="3" height="7" fill="#fff"/><rect x="6" y="6" width="5" height="7" fill="#fff"/><rect x="12" y="6" width="2" height="7" fill="#fff"/><rect x="7" y="7" width="3" height="1" fill="#000090"/><rect x="7" y="9" width="3" height="1" fill="#000090"/><rect x="7" y="11" width="3" height="1" fill="#000090"/></svg>
<div class="t" style="left:134px;top:89px;line-height:16px">ADDRESSES</div>
<div class="a" style="left:112px;top:109px;width:9px;height:9px;background:#fff;border:1px solid #A8A08C"></div>
<div class="a" style="left:114px;top:113px;width:5px;height:1px;background:#000"></div>
<div class="a" style="left:116px;top:111px;width:1px;height:5px;background:#000"></div>
<div class="a" style="left:122px;top:113px;width:5px;height:1px;background:repeating-linear-gradient(to right,#A8A290 0,#A8A290 1px,transparent 1px,transparent 2px)"></div>
<svg style="left:130px;top:105px" width="16" height="16" shape-rendering="crispEdges"><path d="M3 1H7V2H8V3H14V4H15V14H14V15H2V14H1V3H2V2H3Z" fill="#000"/><path d="M3 2H7V3H8V4H14V14H2V3H3Z" fill="#FFFF00"/><rect x="3" y="5" width="10" height="8" fill="#000"/><rect x="4" y="6" width="4" height="6" fill="#fff"/><rect x="9" y="6" width="3" height="6" fill="#fff"/><rect x="4" y="6" width="1" height="1" fill="#0000FF"/><rect x="5" y="6" width="1" height="1" fill="#00FFFF"/><rect x="6" y="6" width="1" height="1" fill="#0000FF"/><rect x="7" y="6" width="1" height="1" fill="#00FFFF"/><rect x="9" y="6" width="1" height="1" fill="#00FFFF"/><rect x="10" y="6" width="1" height="1" fill="#0000FF"/><rect x="11" y="6" width="1" height="1" fill="#00FFFF"/><rect x="5" y="8" width="2" height="1" fill="#000080"/><rect x="5" y="10" width="2" height="1" fill="#000080"/></svg>
<div class="t" style="left:152px;top:105px;line-height:16px;font-weight:bold;font-size:12px;letter-spacing:-0.15px">Columns</div>
<div class="a" style="left:112px;top:125px;width:9px;height:9px;background:#fff;border:1px solid #A8A08C"></div>
<div class="a" style="left:114px;top:129px;width:5px;height:1px;background:#000"></div>
<div class="a" style="left:122px;top:129px;width:5px;height:1px;background:repeating-linear-gradient(to right,#A8A290 0,#A8A290 1px,transparent 1px,transparent 2px)"></div>
<svg style="left:130px;top:121px" width="16" height="16" shape-rendering="crispEdges"><path d="M3 1H7V2H8V3H14V4H15V14H14V15H2V14H1V3H2V2H3Z" fill="#000"/><path d="M3 2H7V3H8V4H14V14H2V3H3Z" fill="#FFFF00"/><rect x="3" y="5" width="10" height="8" fill="#000"/><rect x="4" y="6" width="4" height="6" fill="#fff"/><rect x="9" y="6" width="3" height="6" fill="#fff"/><rect x="4" y="6" width="1" height="1" fill="#0000FF"/><rect x="5" y="6" width="1" height="1" fill="#00FFFF"/><rect x="6" y="6" width="1" height="1" fill="#0000FF"/><rect x="7" y="6" width="1" height="1" fill="#00FFFF"/><rect x="9" y="6" width="1" height="1" fill="#00FFFF"/><rect x="10" y="6" width="1" height="1" fill="#0000FF"/><rect x="11" y="6" width="1" height="1" fill="#00FFFF"/><rect x="5" y="8" width="2" height="1" fill="#000080"/><rect x="5" y="10" width="2" height="1" fill="#000080"/></svg>
<div class="t" style="left:152px;top:121px;line-height:16px;font-weight:bold;font-size:12px;letter-spacing:-0.15px">Indexes</div>
<div class="a" style="left:136px;top:145px;width:10px;height:1px;background:repeating-linear-gradient(to right,#A8A290 0,#A8A290 1px,transparent 1px,transparent 2px)"></div>
<svg style="left:148px;top:137px" width="16" height="16" shape-rendering="crispEdges"><rect x="5" y="5" width="10" height="9" fill="#000"/><rect x="6" y="6" width="5" height="7" fill="#fff"/><rect x="5" y="5" width="9" height="1" fill="#000090"/><rect x="7" y="7" width="2" height="1" fill="#000090"/><rect x="7" y="9" width="2" height="1" fill="#000090"/><rect x="7" y="11" width="2" height="1" fill="#000090"/><rect x="12" y="6" width="2" height="2" fill="#FFFF00"/><rect x="12" y="8" width="2" height="3" fill="#00FF00"/><rect x="12" y="11" width="2" height="2" fill="#FF0000"/></svg>
<div class="t" style="left:170px;top:137px;line-height:16px">IDX_ADR_CITY_UPPER</div>
<div class="a" style="left:136px;top:161px;width:10px;height:1px;background:repeating-linear-gradient(to right,#A8A290 0,#A8A290 1px,transparent 1px,transparent 2px)"></div>
<svg style="left:148px;top:153px" width="16" height="16" shape-rendering="crispEdges"><rect x="5" y="5" width="10" height="9" fill="#000"/><rect x="6" y="6" width="5" height="7" fill="#fff"/><rect x="5" y="5" width="9" height="1" fill="#000090"/><rect x="7" y="7" width="2" height="1" fill="#000090"/><rect x="7" y="9" width="2" height="1" fill="#000090"/><rect x="7" y="11" width="2" height="1" fill="#000090"/><rect x="12" y="6" width="2" height="2" fill="#FFFF00"/><rect x="12" y="8" width="2" height="3" fill="#00FF00"/><rect x="12" y="11" width="2" height="2" fill="#FF0000"/></svg>
<div class="t" style="left:170px;top:153px;line-height:16px">IDX_ADR_STREET_UPPER</div>
<div class="a" style="left:136px;top:177px;width:10px;height:1px;background:repeating-linear-gradient(to right,#A8A290 0,#A8A290 1px,transparent 1px,transparent 2px)"></div>
<svg style="left:148px;top:169px" width="16" height="16" shape-rendering="crispEdges"><rect x="5" y="5" width="10" height="9" fill="#000"/><rect x="6" y="6" width="5" height="7" fill="#fff"/><rect x="5" y="5" width="9" height="1" fill="#000090"/><rect x="7" y="7" width="2" height="1" fill="#000090"/><rect x="7" y="9" width="2" height="1" fill="#000090"/><rect x="7" y="11" width="2" height="1" fill="#000090"/><rect x="12" y="6" width="2" height="2" fill="#FFFF00"/><rect x="12" y="8" width="2" height="3" fill="#00FF00"/><rect x="12" y="11" width="2" height="2" fill="#FF0000"/></svg>
<div class="t" style="left:170px;top:169px;line-height:16px">IDX_PK_ADR</div>
<div class="a" style="left:136px;top:193px;width:10px;height:1px;background:repeating-linear-gradient(to right,#A8A290 0,#A8A290 1px,transparent 1px,transparent 2px)"></div>
<svg style="left:148px;top:185px" width="16" height="16" shape-rendering="crispEdges"><rect x="5" y="5" width="10" height="9" fill="#000"/><rect x="6" y="6" width="5" height="7" fill="#fff"/><rect x="5" y="5" width="9" height="1" fill="#000090"/><rect x="7" y="7" width="2" height="1" fill="#000090"/><rect x="7" y="9" width="2" height="1" fill="#000090"/><rect x="7" y="11" width="2" height="1" fill="#000090"/><rect x="12" y="6" width="2" height="2" fill="#FFFF00"/><rect x="12" y="8" width="2" height="3" fill="#00FF00"/><rect x="12" y="11" width="2" height="2" fill="#FF0000"/></svg>
<div class="t" style="left:170px;top:185px;line-height:16px">IDX_PK_ADR</div>
<div class="a" style="left:136px;top:209px;width:10px;height:1px;background:repeating-linear-gradient(to right,#A8A290 0,#A8A290 1px,transparent 1px,transparent 2px)"></div>
<svg style="left:148px;top:201px" width="16" height="16" shape-rendering="crispEdges"><rect x="5" y="5" width="10" height="9" fill="#000"/><rect x="6" y="6" width="5" height="7" fill="#fff"/><rect x="5" y="5" width="9" height="1" fill="#000090"/><rect x="7" y="7" width="2" height="1" fill="#000090"/><rect x="7" y="9" width="2" height="1" fill="#000090"/><rect x="7" y="11" width="2" height="1" fill="#000090"/><rect x="12" y="6" width="2" height="2" fill="#FFFF00"/><rect x="12" y="8" width="2" height="3" fill="#00FF00"/><rect x="12" y="11" width="2" height="2" fill="#FF0000"/></svg>
<div class="t" style="left:170px;top:201px;line-height:16px">RDB$FOREIGN106</div>
<div class="a" style="left:136px;top:225px;width:10px;height:1px;background:repeating-linear-gradient(to right,#A8A290 0,#A8A290 1px,transparent 1px,transparent 2px)"></div>
<svg style="left:148px;top:217px" width="16" height="16" shape-rendering="crispEdges"><rect x="5" y="5" width="10" height="9" fill="#000"/><rect x="6" y="6" width="5" height="7" fill="#fff"/><rect x="5" y="5" width="9" height="1" fill="#000090"/><rect x="7" y="7" width="2" height="1" fill="#000090"/><rect x="7" y="9" width="2" height="1" fill="#000090"/><rect x="7" y="11" width="2" height="1" fill="#000090"/><rect x="12" y="6" width="2" height="2" fill="#FFFF00"/><rect x="12" y="8" width="2" height="3" fill="#00FF00"/><rect x="12" y="11" width="2" height="2" fill="#FF0000"/></svg>
<div class="t" style="left:170px;top:217px;line-height:16px">RDB$FOREIGN30</div>
<div class="a" style="left:136px;top:241px;width:10px;height:1px;background:repeating-linear-gradient(to right,#A8A290 0,#A8A290 1px,transparent 1px,transparent 2px)"></div>
<svg style="left:148px;top:233px" width="16" height="16" shape-rendering="crispEdges"><rect x="5" y="5" width="10" height="9" fill="#000"/><rect x="6" y="6" width="5" height="7" fill="#fff"/><rect x="5" y="5" width="9" height="1" fill="#000090"/><rect x="7" y="7" width="2" height="1" fill="#000090"/><rect x="7" y="9" width="2" height="1" fill="#000090"/><rect x="7" y="11" width="2" height="1" fill="#000090"/><rect x="12" y="6" width="2" height="2" fill="#FFFF00"/><rect x="12" y="8" width="2" height="3" fill="#00FF00"/><rect x="12" y="11" width="2" height="2" fill="#FF0000"/></svg>
<div class="t" style="left:170px;top:233px;line-height:16px">RDB$FOREIGN30</div>
<div class="a" style="left:112px;top:253px;width:9px;height:9px;background:#fff;border:1px solid #A8A08C"></div>
<div class="a" style="left:114px;top:257px;width:5px;height:1px;background:#000"></div>
<div class="a" style="left:122px;top:257px;width:5px;height:1px;background:repeating-linear-gradient(to right,#A8A290 0,#A8A290 1px,transparent 1px,transparent 2px)"></div>
<svg style="left:130px;top:249px" width="16" height="16" shape-rendering="crispEdges"><path d="M3 1H7V2H8V3H14V4H15V14H14V15H2V14H1V3H2V2H3Z" fill="#000"/><path d="M3 2H7V3H8V4H14V14H2V3H3Z" fill="#FFFF00"/><rect x="3" y="5" width="10" height="8" fill="#000"/><rect x="4" y="6" width="4" height="6" fill="#fff"/><rect x="9" y="6" width="3" height="6" fill="#fff"/><rect x="4" y="6" width="1" height="1" fill="#0000FF"/><rect x="5" y="6" width="1" height="1" fill="#00FFFF"/><rect x="6" y="6" width="1" height="1" fill="#0000FF"/><rect x="7" y="6" width="1" height="1" fill="#00FFFF"/><rect x="9" y="6" width="1" height="1" fill="#00FFFF"/><rect x="10" y="6" width="1" height="1" fill="#0000FF"/><rect x="11" y="6" width="1" height="1" fill="#00FFFF"/><rect x="5" y="8" width="2" height="1" fill="#000080"/><rect x="5" y="10" width="2" height="1" fill="#000080"/></svg>
<div class="t" style="left:152px;top:249px;line-height:16px;font-weight:bold;font-size:12px;letter-spacing:-0.15px">Primary Key</div>
<div class="a" style="left:130px;top:269px;width:9px;height:9px;background:#fff;border:1px solid #A8A08C"></div>
<div class="a" style="left:132px;top:273px;width:5px;height:1px;background:#000"></div>
<div class="a" style="left:134px;top:271px;width:1px;height:5px;background:#000"></div>
<div class="a" style="left:140px;top:273px;width:5px;height:1px;background:repeating-linear-gradient(to right,#A8A290 0,#A8A290 1px,transparent 1px,transparent 2px)"></div>
<svg style="left:148px;top:265px" width="16" height="16" shape-rendering="crispEdges"><rect x="1" y="2" width="14" height="12" fill="#000"/><rect x="2" y="3" width="12" height="2" fill="#0000FF"/><rect x="3" y="3" width="1" height="1" fill="#00FFFF"/><rect x="5" y="3" width="1" height="1" fill="#00FFFF"/><rect x="7" y="3" width="1" height="1" fill="#00FFFF"/><rect x="9" y="3" width="1" height="1" fill="#00FFFF"/><rect x="11" y="3" width="1" height="1" fill="#00FFFF"/><rect x="13" y="3" width="1" height="1" fill="#00FFFF"/><rect x="2" y="4" width="1" height="1" fill="#00FFFF"/><rect x="4" y="4" width="1" height="1" fill="#00FFFF"/><rect x="6" y="4" width="1" height="1" fill="#00FFFF"/><rect x="8" y="4" width="1" height="1" fill="#00FFFF"/><rect x="2" y="6" width="3" height="7" fill="#fff"/><rect x="6" y="6" width="4" height="7" fill="#fff"/><rect x="7" y="7" width="2" height="1" fill="#0000C0"/><rect x="7" y="9" width="2" height="1" fill="#0000C0"/><rect x="7" y="11" width="3" height="1" fill="#0000C0"/><path d="M10 4H15V5H16V9H15V10H14V16H10V10H9V9H8V5H9V4Z" fill="#000"/><path d="M10 5H14V6H15V8H14V9H13V15H11V9H10V8H9V6H10Z" fill="#FFFF00"/><rect x="11" y="7" width="3" height="1" fill="#000"/><rect x="14" y="11" width="1" height="1" fill="#FFFF00"/><rect x="14" y="13" width="1" height="1" fill="#FFFF00"/></svg>
<div class="t" style="left:170px;top:265px;line-height:16px">PK_ADR</div>
<div class="a" style="left:118px;top:289px;width:10px;height:1px;background:repeating-linear-gradient(to right,#A8A290 0,#A8A290 1px,transparent 1px,transparent 2px)"></div>
<svg style="left:130px;top:281px" width="16" height="16" shape-rendering="crispEdges"><path d="M3 1H7V2H8V3H14V4H15V14H14V15H2V14H1V3H2V2H3Z" fill="#000"/><path d="M3 2H7V3H8V4H14V14H2V3H3Z" fill="#FFFF00"/><rect x="3" y="5" width="10" height="8" fill="#000"/><rect x="4" y="6" width="4" height="6" fill="#fff"/><rect x="9" y="6" width="3" height="6" fill="#fff"/><rect x="4" y="6" width="1" height="1" fill="#0000FF"/><rect x="5" y="6" width="1" height="1" fill="#00FFFF"/><rect x="6" y="6" width="1" height="1" fill="#0000FF"/><rect x="7" y="6" width="1" height="1" fill="#00FFFF"/><rect x="9" y="6" width="1" height="1" fill="#00FFFF"/><rect x="10" y="6" width="1" height="1" fill="#0000FF"/><rect x="11" y="6" width="1" height="1" fill="#00FFFF"/><rect x="5" y="8" width="2" height="1" fill="#000080"/><rect x="5" y="10" width="2" height="1" fill="#000080"/></svg>
<div class="t" style="left:152px;top:281px;line-height:16px;font-weight:bold;font-size:12px;letter-spacing:-0.15px">Referential Constraints</div>
<div class="a" style="left:118px;top:305px;width:10px;height:1px;background:repeating-linear-gradient(to right,#A8A290 0,#A8A290 1px,transparent 1px,transparent 2px)"></div>
<svg style="left:130px;top:297px" width="16" height="16" shape-rendering="crispEdges"><path d="M3 1H7V2H8V3H14V4H15V14H14V15H2V14H1V3H2V2H3Z" fill="#000"/><path d="M3 2H7V3H8V4H14V14H2V3H3Z" fill="#FFFF00"/><rect x="3" y="5" width="10" height="8" fill="#000"/><rect x="4" y="6" width="4" height="6" fill="#fff"/><rect x="9" y="6" width="3" height="6" fill="#fff"/><rect x="4" y="6" width="1" height="1" fill="#0000FF"/><rect x="5" y="6" width="1" height="1" fill="#00FFFF"/><rect x="6" y="6" width="1" height="1" fill="#0000FF"/><rect x="7" y="6" width="1" height="1" fill="#00FFFF"/><rect x="9" y="6" width="1" height="1" fill="#00FFFF"/><rect x="10" y="6" width="1" height="1" fill="#0000FF"/><rect x="11" y="6" width="1" height="1" fill="#00FFFF"/><rect x="5" y="8" width="2" height="1" fill="#000080"/><rect x="5" y="10" width="2" height="1" fill="#000080"/></svg>
<div class="t" style="left:152px;top:297px;line-height:16px;font-weight:bold;font-size:12px;letter-spacing:-0.15px">Unique Constraints</div>
<div class="a" style="left:118px;top:321px;width:10px;height:1px;background:repeating-linear-gradient(to right,#A8A290 0,#A8A290 1px,transparent 1px,transparent 2px)"></div>
<svg style="left:130px;top:313px" width="16" height="16" shape-rendering="crispEdges"><path d="M3 1H7V2H8V3H14V4H15V14H14V15H2V14H1V3H2V2H3Z" fill="#000"/><path d="M3 2H7V3H8V4H14V14H2V3H3Z" fill="#FFFF00"/><rect x="3" y="5" width="10" height="8" fill="#000"/><rect x="4" y="6" width="4" height="6" fill="#fff"/><rect x="9" y="6" width="3" height="6" fill="#fff"/><rect x="4" y="6" width="1" height="1" fill="#0000FF"/><rect x="5" y="6" width="1" height="1" fill="#00FFFF"/><rect x="6" y="6" width="1" height="1" fill="#0000FF"/><rect x="7" y="6" width="1" height="1" fill="#00FFFF"/><rect x="9" y="6" width="1" height="1" fill="#00FFFF"/><rect x="10" y="6" width="1" height="1" fill="#0000FF"/><rect x="11" y="6" width="1" height="1" fill="#00FFFF"/><rect x="5" y="8" width="2" height="1" fill="#000080"/><rect x="5" y="10" width="2" height="1" fill="#000080"/></svg>
<div class="t" style="left:152px;top:313px;line-height:16px;font-weight:bold;font-size:12px;letter-spacing:-0.15px">Check Constraints</div>
<div class="a" style="left:112px;top:333px;width:9px;height:9px;background:#fff;border:1px solid #A8A08C"></div>
<div class="a" style="left:114px;top:337px;width:5px;height:1px;background:#000"></div>
<div class="a" style="left:122px;top:337px;width:5px;height:1px;background:repeating-linear-gradient(to right,#A8A290 0,#A8A290 1px,transparent 1px,transparent 2px)"></div>
<svg style="left:130px;top:329px" width="16" height="16" shape-rendering="crispEdges"><path d="M3 1H7V2H8V3H14V4H15V14H14V15H2V14H1V3H2V2H3Z" fill="#000"/><path d="M3 2H7V3H8V4H14V14H2V3H3Z" fill="#FFFF00"/><rect x="3" y="5" width="10" height="8" fill="#000"/><rect x="4" y="6" width="4" height="6" fill="#fff"/><rect x="9" y="6" width="3" height="6" fill="#fff"/><rect x="4" y="6" width="1" height="1" fill="#0000FF"/><rect x="5" y="6" width="1" height="1" fill="#00FFFF"/><rect x="6" y="6" width="1" height="1" fill="#0000FF"/><rect x="7" y="6" width="1" height="1" fill="#00FFFF"/><rect x="9" y="6" width="1" height="1" fill="#00FFFF"/><rect x="10" y="6" width="1" height="1" fill="#0000FF"/><rect x="11" y="6" width="1" height="1" fill="#00FFFF"/><rect x="5" y="8" width="2" height="1" fill="#000080"/><rect x="5" y="10" width="2" height="1" fill="#000080"/></svg>
<div class="t" style="left:152px;top:329px;line-height:16px;font-weight:bold;font-size:12px;letter-spacing:-0.15px">Triggers</div>
<div class="a" style="left:136px;top:353px;width:10px;height:1px;background:repeating-linear-gradient(to right,#A8A290 0,#A8A290 1px,transparent 1px,transparent 2px)"></div>
<svg style="left:148px;top:345px" width="16" height="16" shape-rendering="crispEdges"><rect x="7" y="1" width="1" height="7" fill="#000"/><rect x="0" y="7" width="8" height="1" fill="#000"/><rect x="4" y="8" width="1" height="5" fill="#000"/><rect x="4" y="12" width="5" height="1" fill="#000"/><rect x="8" y="11" width="7" height="3" fill="#000"/><rect x="9" y="12" width="5" height="1" fill="#E0E0E0"/><rect x="1" y="6" width="1" height="1" fill="#0000FF"/><rect x="2" y="6" width="1" height="1" fill="#00FFFF"/><rect x="3" y="6" width="1" height="1" fill="#0000FF"/><rect x="4" y="6" width="1" height="1" fill="#00FFFF"/><rect x="5" y="6" width="1" height="1" fill="#0000FF"/><rect x="6" y="6" width="1" height="1" fill="#00FFFF"/><rect x="4" y="5" width="1" height="1" fill="#0000FF"/><rect x="5" y="5" width="1" height="1" fill="#00FFFF"/><rect x="6" y="5" width="1" height="1" fill="#0000FF"/><rect x="6" y="4" width="1" height="1" fill="#00FFFF"/><rect x="6" y="3" width="1" height="1" fill="#0000FF"/><rect x="6" y="2" width="1" height="1" fill="#00FFFF"/></svg>
<div class="a" style="left:166px;top:345px;width:78px;height:16px;background:#ECE9D8"></div>
<div class="t" style="left:170px;top:345px;line-height:16px">ADR_BUD_01</div>
<div class="a" style="left:136px;top:369px;width:10px;height:1px;background:repeating-linear-gradient(to right,#A8A290 0,#A8A290 1px,transparent 1px,transparent 2px)"></div>
<svg style="left:148px;top:361px" width="16" height="16" shape-rendering="crispEdges"><rect x="7" y="1" width="1" height="7" fill="#000"/><rect x="0" y="7" width="8" height="1" fill="#000"/><rect x="4" y="8" width="1" height="5" fill="#000"/><rect x="4" y="12" width="5" height="1" fill="#000"/><rect x="8" y="11" width="7" height="3" fill="#000"/><rect x="9" y="12" width="5" height="1" fill="#E0E0E0"/><rect x="1" y="6" width="1" height="1" fill="#0000FF"/><rect x="2" y="6" width="1" height="1" fill="#00FFFF"/><rect x="3" y="6" width="1" height="1" fill="#0000FF"/><rect x="4" y="6" width="1" height="1" fill="#00FFFF"/><rect x="5" y="6" width="1" height="1" fill="#0000FF"/><rect x="6" y="6" width="1" height="1" fill="#00FFFF"/><rect x="4" y="5" width="1" height="1" fill="#0000FF"/><rect x="5" y="5" width="1" height="1" fill="#00FFFF"/><rect x="6" y="5" width="1" height="1" fill="#0000FF"/><rect x="6" y="4" width="1" height="1" fill="#00FFFF"/><rect x="6" y="3" width="1" height="1" fill="#0000FF"/><rect x="6" y="2" width="1" height="1" fill="#00FFFF"/></svg>
<div class="t" style="left:170px;top:361px;line-height:16px">ADR_BI_05</div>
<div class="a" style="left:136px;top:385px;width:10px;height:1px;background:repeating-linear-gradient(to right,#A8A290 0,#A8A290 1px,transparent 1px,transparent 2px)"></div>
<svg style="left:148px;top:377px" width="16" height="16" shape-rendering="crispEdges"><rect x="7" y="1" width="1" height="7" fill="#000"/><rect x="0" y="7" width="8" height="1" fill="#000"/><rect x="4" y="8" width="1" height="5" fill="#000"/><rect x="4" y="12" width="5" height="1" fill="#000"/><rect x="8" y="11" width="7" height="3" fill="#000"/><rect x="9" y="12" width="5" height="1" fill="#E0E0E0"/><rect x="1" y="6" width="1" height="1" fill="#0000FF"/><rect x="2" y="6" width="1" height="1" fill="#00FFFF"/><rect x="3" y="6" width="1" height="1" fill="#0000FF"/><rect x="4" y="6" width="1" height="1" fill="#00FFFF"/><rect x="5" y="6" width="1" height="1" fill="#0000FF"/><rect x="6" y="6" width="1" height="1" fill="#00FFFF"/><rect x="4" y="5" width="1" height="1" fill="#0000FF"/><rect x="5" y="5" width="1" height="1" fill="#00FFFF"/><rect x="6" y="5" width="1" height="1" fill="#0000FF"/><rect x="6" y="4" width="1" height="1" fill="#00FFFF"/><rect x="6" y="3" width="1" height="1" fill="#0000FF"/><rect x="6" y="2" width="1" height="1" fill="#00FFFF"/></svg>
<div class="t" style="left:170px;top:377px;line-height:16px">ADR_BI_10</div>
<div class="a" style="left:136px;top:401px;width:10px;height:1px;background:repeating-linear-gradient(to right,#A8A290 0,#A8A290 1px,transparent 1px,transparent 2px)"></div>
<svg style="left:148px;top:393px" width="16" height="16" shape-rendering="crispEdges"><rect x="7" y="1" width="1" height="7" fill="#000"/><rect x="0" y="7" width="8" height="1" fill="#000"/><rect x="4" y="8" width="1" height="5" fill="#000"/><rect x="4" y="12" width="5" height="1" fill="#000"/><rect x="8" y="11" width="7" height="3" fill="#000"/><rect x="9" y="12" width="5" height="1" fill="#E0E0E0"/><rect x="1" y="6" width="1" height="1" fill="#0000FF"/><rect x="2" y="6" width="1" height="1" fill="#00FFFF"/><rect x="3" y="6" width="1" height="1" fill="#0000FF"/><rect x="4" y="6" width="1" height="1" fill="#00FFFF"/><rect x="5" y="6" width="1" height="1" fill="#0000FF"/><rect x="6" y="6" width="1" height="1" fill="#00FFFF"/><rect x="4" y="5" width="1" height="1" fill="#0000FF"/><rect x="5" y="5" width="1" height="1" fill="#00FFFF"/><rect x="6" y="5" width="1" height="1" fill="#0000FF"/><rect x="6" y="4" width="1" height="1" fill="#00FFFF"/><rect x="6" y="3" width="1" height="1" fill="#0000FF"/><rect x="6" y="2" width="1" height="1" fill="#00FFFF"/></svg>
<div class="t" style="left:170px;top:393px;line-height:16px">ADR_BU_10</div>
<div class="a" style="left:136px;top:417px;width:10px;height:1px;background:repeating-linear-gradient(to right,#A8A290 0,#A8A290 1px,transparent 1px,transparent 2px)"></div>
<svg style="left:148px;top:409px" width="16" height="16" shape-rendering="crispEdges"><rect x="7" y="1" width="1" height="7" fill="#000"/><rect x="0" y="7" width="8" height="1" fill="#000"/><rect x="4" y="8" width="1" height="5" fill="#000"/><rect x="4" y="12" width="5" height="1" fill="#000"/><rect x="8" y="11" width="7" height="3" fill="#000"/><rect x="9" y="12" width="5" height="1" fill="#E0E0E0"/><rect x="1" y="6" width="1" height="1" fill="#0000FF"/><rect x="2" y="6" width="1" height="1" fill="#00FFFF"/><rect x="3" y="6" width="1" height="1" fill="#0000FF"/><rect x="4" y="6" width="1" height="1" fill="#00FFFF"/><rect x="5" y="6" width="1" height="1" fill="#0000FF"/><rect x="6" y="6" width="1" height="1" fill="#00FFFF"/><rect x="4" y="5" width="1" height="1" fill="#0000FF"/><rect x="5" y="5" width="1" height="1" fill="#00FFFF"/><rect x="6" y="5" width="1" height="1" fill="#0000FF"/><rect x="6" y="4" width="1" height="1" fill="#00FFFF"/><rect x="6" y="3" width="1" height="1" fill="#0000FF"/><rect x="6" y="2" width="1" height="1" fill="#00FFFF"/></svg>
<div class="t" style="left:170px;top:409px;line-height:16px">ADR_AD_30</div>
<div class="a" style="left:136px;top:433px;width:10px;height:1px;background:repeating-linear-gradient(to right,#A8A290 0,#A8A290 1px,transparent 1px,transparent 2px)"></div>
<svg style="left:148px;top:425px" width="16" height="16" shape-rendering="crispEdges"><rect x="7" y="1" width="1" height="7" fill="#000"/><rect x="0" y="7" width="8" height="1" fill="#000"/><rect x="4" y="8" width="1" height="5" fill="#000"/><rect x="4" y="12" width="5" height="1" fill="#000"/><rect x="8" y="11" width="7" height="3" fill="#000"/><rect x="9" y="12" width="5" height="1" fill="#E0E0E0"/><rect x="1" y="6" width="1" height="1" fill="#0000FF"/><rect x="2" y="6" width="1" height="1" fill="#00FFFF"/><rect x="3" y="6" width="1" height="1" fill="#0000FF"/><rect x="4" y="6" width="1" height="1" fill="#00FFFF"/><rect x="5" y="6" width="1" height="1" fill="#0000FF"/><rect x="6" y="6" width="1" height="1" fill="#00FFFF"/><rect x="4" y="5" width="1" height="1" fill="#0000FF"/><rect x="5" y="5" width="1" height="1" fill="#00FFFF"/><rect x="6" y="5" width="1" height="1" fill="#0000FF"/><rect x="6" y="4" width="1" height="1" fill="#00FFFF"/><rect x="6" y="3" width="1" height="1" fill="#0000FF"/><rect x="6" y="2" width="1" height="1" fill="#00FFFF"/></svg>
<div class="t" style="left:170px;top:425px;line-height:16px">ADR_AI_30</div>
<div class="a" style="left:136px;top:449px;width:10px;height:1px;background:repeating-linear-gradient(to right,#A8A290 0,#A8A290 1px,transparent 1px,transparent 2px)"></div>
<svg style="left:148px;top:441px" width="16" height="16" shape-rendering="crispEdges"><rect x="7" y="1" width="1" height="7" fill="#000"/><rect x="0" y="7" width="8" height="1" fill="#000"/><rect x="4" y="8" width="1" height="5" fill="#000"/><rect x="4" y="12" width="5" height="1" fill="#000"/><rect x="8" y="11" width="7" height="3" fill="#000"/><rect x="9" y="12" width="5" height="1" fill="#E0E0E0"/><rect x="1" y="6" width="1" height="1" fill="#0000FF"/><rect x="2" y="6" width="1" height="1" fill="#00FFFF"/><rect x="3" y="6" width="1" height="1" fill="#0000FF"/><rect x="4" y="6" width="1" height="1" fill="#00FFFF"/><rect x="5" y="6" width="1" height="1" fill="#0000FF"/><rect x="6" y="6" width="1" height="1" fill="#00FFFF"/><rect x="4" y="5" width="1" height="1" fill="#0000FF"/><rect x="5" y="5" width="1" height="1" fill="#00FFFF"/><rect x="6" y="5" width="1" height="1" fill="#0000FF"/><rect x="6" y="4" width="1" height="1" fill="#00FFFF"/><rect x="6" y="3" width="1" height="1" fill="#0000FF"/><rect x="6" y="2" width="1" height="1" fill="#00FFFF"/></svg>
<div class="t" style="left:170px;top:441px;line-height:16px">ADR_AU_30</div>
<div class="a" style="left:94px;top:461px;width:9px;height:9px;background:#fff;border:1px solid #A8A08C"></div>
<div class="a" style="left:96px;top:465px;width:5px;height:1px;background:#000"></div>
<div class="a" style="left:98px;top:463px;width:1px;height:5px;background:#000"></div>
<div class="a" style="left:104px;top:465px;width:5px;height:1px;background:repeating-linear-gradient(to right,#A8A290 0,#A8A290 1px,transparent 1px,transparent 2px)"></div>
<svg style="left:112px;top:457px" width="16" height="16" shape-rendering="crispEdges"><rect x="1" y="2" width="14" height="12" fill="#000"/><rect x="2" y="3" width="12" height="3" fill="#0000F0"/><rect x="3" y="3" width="1" height="1" fill="#00FFFF"/><rect x="5" y="3" width="1" height="1" fill="#00FFFF"/><rect x="7" y="3" width="1" height="1" fill="#00FFFF"/><rect x="9" y="3" width="1" height="1" fill="#00FFFF"/><rect x="11" y="3" width="1" height="1" fill="#00FFFF"/><rect x="13" y="3" width="1" height="1" fill="#00FFFF"/><rect x="2" y="4" width="1" height="1" fill="#00FFFF"/><rect x="4" y="4" width="1" height="1" fill="#00FFFF"/><rect x="6" y="4" width="1" height="1" fill="#00FFFF"/><rect x="8" y="4" width="1" height="1" fill="#00FFFF"/><rect x="10" y="4" width="1" height="1" fill="#00FFFF"/><rect x="12" y="4" width="1" height="1" fill="#00FFFF"/><rect x="2" y="6" width="3" height="7" fill="#fff"/><rect x="6" y="6" width="5" height="7" fill="#fff"/><rect x="12" y="6" width="2" height="7" fill="#fff"/><rect x="7" y="7" width="3" height="1" fill="#000090"/><rect x="7" y="9" width="3" height="1" fill="#000090"/><rect x="7" y="11" width="3" height="1" fill="#000090"/></svg>
<div class="t" style="left:134px;top:457px;line-height:16px">ADMIN_ACTIONS</div>
<div class="a" style="left:94px;top:477px;width:9px;height:9px;background:#fff;border:1px solid #A8A08C"></div>
<div class="a" style="left:96px;top:481px;width:5px;height:1px;background:#000"></div>
<div class="a" style="left:98px;top:479px;width:1px;height:5px;background:#000"></div>
<div class="a" style="left:104px;top:481px;width:5px;height:1px;background:repeating-linear-gradient(to right,#A8A290 0,#A8A290 1px,transparent 1px,transparent 2px)"></div>
<svg style="left:112px;top:473px" width="16" height="16" shape-rendering="crispEdges"><rect x="1" y="2" width="14" height="12" fill="#000"/><rect x="2" y="3" width="12" height="3" fill="#0000F0"/><rect x="3" y="3" width="1" height="1" fill="#00FFFF"/><rect x="5" y="3" width="1" height="1" fill="#00FFFF"/><rect x="7" y="3" width="1" height="1" fill="#00FFFF"/><rect x="9" y="3" width="1" height="1" fill="#00FFFF"/><rect x="11" y="3" width="1" height="1" fill="#00FFFF"/><rect x="13" y="3" width="1" height="1" fill="#00FFFF"/><rect x="2" y="4" width="1" height="1" fill="#00FFFF"/><rect x="4" y="4" width="1" height="1" fill="#00FFFF"/><rect x="6" y="4" width="1" height="1" fill="#00FFFF"/><rect x="8" y="4" width="1" height="1" fill="#00FFFF"/><rect x="10" y="4" width="1" height="1" fill="#00FFFF"/><rect x="12" y="4" width="1" height="1" fill="#00FFFF"/><rect x="2" y="6" width="3" height="7" fill="#fff"/><rect x="6" y="6" width="5" height="7" fill="#fff"/><rect x="12" y="6" width="2" height="7" fill="#fff"/><rect x="7" y="7" width="3" height="1" fill="#000090"/><rect x="7" y="9" width="3" height="1" fill="#000090"/><rect x="7" y="11" width="3" height="1" fill="#000090"/></svg>
<div class="t" style="left:134px;top:473px;line-height:16px">ADMIN_ACTION_CATEGORIES</div>
<div class="a" style="left:94px;top:493px;width:9px;height:9px;background:#fff;border:1px solid #A8A08C"></div>
<div class="a" style="left:96px;top:497px;width:5px;height:1px;background:#000"></div>
<div class="a" style="left:98px;top:495px;width:1px;height:5px;background:#000"></div>
<div class="a" style="left:104px;top:497px;width:5px;height:1px;background:repeating-linear-gradient(to right,#A8A290 0,#A8A290 1px,transparent 1px,transparent 2px)"></div>
<svg style="left:112px;top:489px" width="16" height="16" shape-rendering="crispEdges"><rect x="1" y="2" width="14" height="12" fill="#000"/><rect x="2" y="3" width="12" height="3" fill="#0000F0"/><rect x="3" y="3" width="1" height="1" fill="#00FFFF"/><rect x="5" y="3" width="1" height="1" fill="#00FFFF"/><rect x="7" y="3" width="1" height="1" fill="#00FFFF"/><rect x="9" y="3" width="1" height="1" fill="#00FFFF"/><rect x="11" y="3" width="1" height="1" fill="#00FFFF"/><rect x="13" y="3" width="1" height="1" fill="#00FFFF"/><rect x="2" y="4" width="1" height="1" fill="#00FFFF"/><rect x="4" y="4" width="1" height="1" fill="#00FFFF"/><rect x="6" y="4" width="1" height="1" fill="#00FFFF"/><rect x="8" y="4" width="1" height="1" fill="#00FFFF"/><rect x="10" y="4" width="1" height="1" fill="#00FFFF"/><rect x="12" y="4" width="1" height="1" fill="#00FFFF"/><rect x="2" y="6" width="3" height="7" fill="#fff"/><rect x="6" y="6" width="5" height="7" fill="#fff"/><rect x="12" y="6" width="2" height="7" fill="#fff"/><rect x="7" y="7" width="3" height="1" fill="#000090"/><rect x="7" y="9" width="3" height="1" fill="#000090"/><rect x="7" y="11" width="3" height="1" fill="#000090"/></svg>
<div class="t" style="left:134px;top:489px;line-height:16px">ADMIN_BLOCKED_SIG_FOR_ZB</div>
</div>
</body></html>
